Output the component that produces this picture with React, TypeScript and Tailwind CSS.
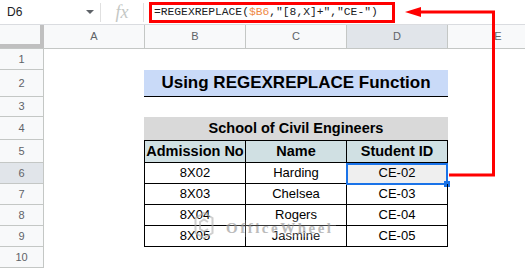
import React from 'react';

const cols = ['A', 'B', 'C', 'D', 'E'];

const data = [
  { n: 6, id: '8X02', name: 'Harding', sid: 'CE-02' },
  { n: 7, id: '8X03', name: 'Chelsea', sid: 'CE-03' },
  { n: 8, id: '8X04', name: 'Rogers', sid: 'CE-04' },
  { n: 9, id: '8X05', name: 'Jasmine', sid: 'CE-05' },
];

function RowHead({ n, active }: { n: number; active?: boolean }) {
  return (
    <div
      className={`flex w-[44px] shrink-0 items-center justify-center border-r border-b border-[#c4c7c5] text-[11px] text-[#5f6368] ${
        active ? 'bg-[#e1e5ea]' : 'bg-[#f8f9fa]'
      }`}
    >
      {n}
    </div>
  );
}

function FormulaBar() {
  return (
    <div className="flex h-[25px] items-center border-b border-[#dadce0] bg-white">
      <div className="flex w-[100px] items-center justify-between pl-[7px] pr-[6px] text-[12px] text-[#202124]">
        <span>D6</span>
        <span className="h-0 w-0 border-x-[4px] border-t-[4px] border-x-transparent border-t-[#5f6368]" />
      </div>
      <div className="h-[19px] w-px bg-[#e0e0e0]" />
      <div className="flex w-[42px] justify-center font-['Liberation_Serif',serif] text-[18px] italic leading-none text-[#c4c7c5]">
        fx
      </div>
      <div className="h-[19px] w-px bg-[#e0e0e0]" />
      <div className="ml-[5px] flex h-[21px] w-[246px] items-center border-[3px] border-[#ff0000] pl-[2px] font-['Liberation_Mono',monospace] text-[11.3px] text-[#202124]">
        <span>=REGEXREPLACE(</span>
        <span className="text-[#ef8b48]">$B6</span>
        <span>,"[8,X]+","CE-")</span>
      </div>
    </div>
  );
}

function ColHeader() {
  return (
    <div className="flex h-[24px] border-b border-[#c4c7c5] bg-[#f8f9fa] text-[11px] text-[#5f6368]">
      <div className="w-[44px] shrink-0 border-r-[4px] border-b-[4px] border-[#c0c0c0] bg-[#f8f9fa]" />
      {cols.map((c) => (
        <div
          key={c}
          className={`flex w-[101px] shrink-0 items-center justify-center border-r border-[#c4c7c5] ${
            c === 'D' ? 'bg-[#e1e5ea]' : ''
          }`}
        >
          {c}
        </div>
      ))}
    </div>
  );
}

export default function App() {
  return (
    <div className="relative h-[268px] w-[525px] overflow-hidden bg-white font-['Liberation_Sans',Arial,sans-serif]">
      <FormulaBar />
      <ColHeader />

      <div className="flex h-[21px]">
        <RowHead n={1} />
      </div>

      <div className="flex h-[27px]">
        <RowHead n={2} />
        <div className="w-[100px] shrink-0" />
        <div className="flex w-[304px] shrink-0 items-center justify-center border-b border-black bg-[#c9daf8] text-[17px] font-bold text-black">
          Using REGEXREPLACE Function
        </div>
      </div>

      <div className="flex h-[20px]">
        <RowHead n={3} />
      </div>

      <div className="flex h-[23px]">
        <RowHead n={4} />
        <div className="w-[100px] shrink-0" />
        <div className="flex w-[304px] shrink-0 items-center justify-center bg-[#d9d9d9] text-[14.5px] font-bold text-black">
          School of Civil Engineers
        </div>
      </div>

      <div className="flex h-[23px]">
        <RowHead n={5} />
        <div className="w-[100px] shrink-0" />
        <div className="flex w-[102px] shrink-0 items-center justify-center border border-black bg-[#d0e0e3] text-[14.5px] font-bold text-black">
          Admission No
        </div>
        <div className="flex w-[101px] shrink-0 items-center justify-center border-y border-r border-black bg-[#d0e0e3] text-[14.5px] font-bold text-black">
          Name
        </div>
        <div className="flex w-[101px] shrink-0 items-center justify-center border-y border-r border-black bg-[#d0e0e3] text-[14.5px] font-bold text-black">
          Student ID
        </div>
      </div>

      {data.map((r) => (
        <div key={r.n} className="flex h-[21px]">
          <RowHead n={r.n} active={r.n === 6} />
          <div className="w-[100px] shrink-0" />
          <div className="flex w-[102px] shrink-0 items-center justify-center border-x border-b border-black text-[13px] text-black">
            {r.id}
          </div>
          <div className="flex w-[101px] shrink-0 items-center justify-center border-r border-b border-black text-[13px] text-black">
            {r.name}
          </div>
          <div
            className={`relative flex w-[101px] shrink-0 items-center justify-center border-r border-b border-black text-[13px] text-black ${
              r.n === 6 ? 'bg-[#efefef]' : ''
            }`}
          >
            {r.sid}
            {r.n === 6 && (
              <div className="absolute -left-px top-0 -right-px -bottom-[2px] border-2 border-[#1a73e8]">
                <div className="absolute -right-[4px] -bottom-[4px] h-[6px] w-[6px] bg-[#1a73e8]" />
              </div>
            )}
          </div>
        </div>
      ))}

      <div className="flex h-[21px]">
        <RowHead n={10} />
      </div>

      {/* watermark */}
      <div className="pointer-events-none absolute left-[194px] top-[211px] opacity-60">
        <svg width="20" height="29" viewBox="0 0 20 29" fill="none" stroke="#b0b0b0" strokeWidth="2">
          <path d="M10 2 L18.5 7 V22 L10 27 L1.5 22 V7 Z" />
          <path d="M14 11 L10 8.5 L6 11 V18 L10 20.5 L14 18" />
        </svg>
      </div>
      <div className="pointer-events-none absolute left-[226px] top-[220px] bg-white/30 pr-[3px] font-['Liberation_Serif',serif] text-[15px] leading-[17px] font-bold tracking-[2.5px] text-[#a0a0a0] opacity-70">
        OfficeWheel
      </div>

      {/* red arrow */}
      <svg className="pointer-events-none absolute inset-0" width="525" height="268">
        <path d="M449 175 H493.5 V12 H418" fill="none" stroke="#ff0000" strokeWidth="3" />
        <polygon points="405,12 421,7 421,17" fill="#ff0000" />
      </svg>
    </div>
  );
}
